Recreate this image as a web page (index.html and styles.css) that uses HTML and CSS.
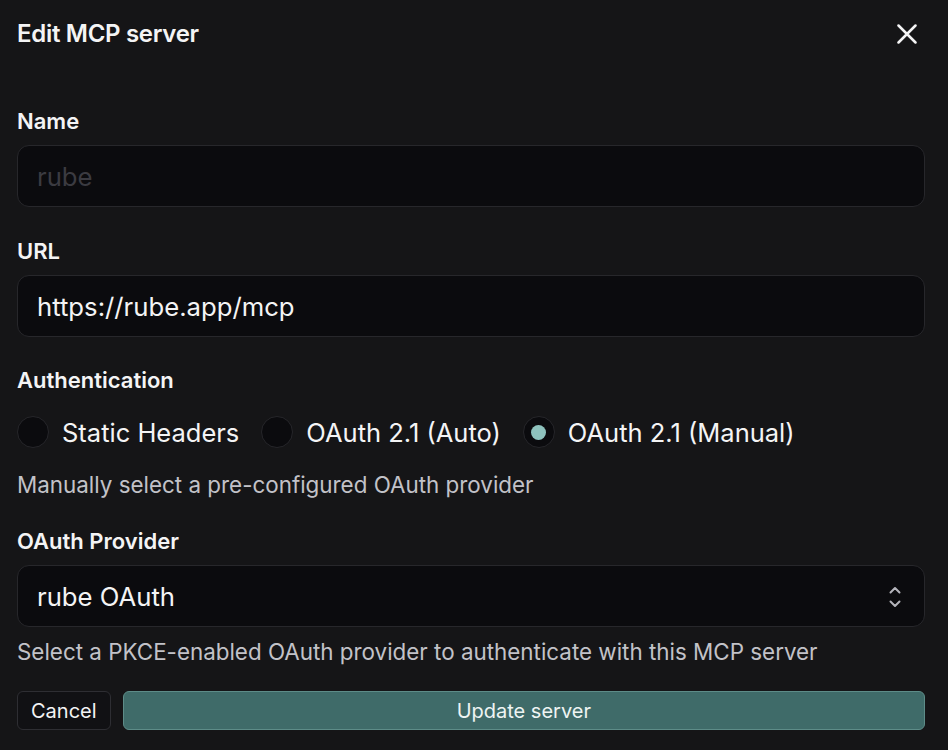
FILE: index.html
```html
<!DOCTYPE html>
<html lang="en">
<head>
<meta charset="utf-8">
<title>Edit MCP server</title>
<link rel="stylesheet" href="styles.css">
</head>
<body>
<div class="dialog">
  <header class="dialog-header">
    <h1 class="dialog-title">Edit MCP server</h1>
    <button class="close-btn" aria-label="Close">
      <svg width="20" height="20" viewBox="0 0 20 20" fill="none" stroke="#f4f4f5" stroke-width="2.5" stroke-linecap="round"><path d="M1.5 1.5 L18.5 18.5 M18.5 1.5 L1.5 18.5"/></svg>
    </button>
  </header>

  <div class="field field-first">
    <label class="field-label">Name</label>
    <div class="input"><span class="placeholder">rube</span></div>
  </div>

  <div class="field">
    <label class="field-label">URL</label>
    <div class="input"><span class="value">https://rube.app/mcp</span></div>
  </div>

  <div class="field field-auth">
    <label class="field-label">Authentication</label>
    <div class="radio-row">
      <div class="radio-item"><span class="radio"></span><span class="radio-label">Static Headers</span></div>
      <div class="radio-item"><span class="radio"></span><span class="radio-label">OAuth 2.1 (Auto)</span></div>
      <div class="radio-item"><span class="radio checked"></span><span class="radio-label">OAuth 2.1 (Manual)</span></div>
    </div>
    <p class="help help-auth">Manually select a pre-configured OAuth provider</p>
  </div>

  <div class="field field-provider">
    <label class="field-label">OAuth Provider</label>
    <div class="input select"><span class="value">rube OAuth</span>
      <svg class="chevrons" width="14" height="26" viewBox="0 0 14 26" fill="none" stroke="#b4b4bb" stroke-width="2" stroke-linecap="round" stroke-linejoin="round"><path d="M2.5 8.5 L7 4 L11.5 8.5"/><path d="M2.5 17.5 L7 22 L11.5 17.5"/></svg>
    </div>
    <p class="help help-provider">Select a PKCE-enabled OAuth provider to authenticate with this MCP server</p>
  </div>

  <div class="actions">
    <button class="btn btn-cancel">Cancel</button>
    <button class="btn btn-primary">Update server</button>
  </div>
</div>
</body>
</html>
```

FILE: styles.css
```css
html, body {
  margin: 0;
  padding: 0;
  background: #151517;
}
body {
  font-family: Inter, "Noto Sans", sans-serif;
  color: #f4f4f5;
}
.dialog {
  padding: 17px 23px 17px 17px;
  box-sizing: border-box;
  width: 948px;
}
.dialog-header {
  display: flex;
  align-items: center;
  justify-content: space-between;
  height: 34px;
}
.dialog-title {
  margin: 0;
  font-size: 24px;
  font-weight: 600;
  letter-spacing: -0.3px;
  line-height: 34px;
}
.close-btn {
  background: none;
  border: none;
  padding: 0;
  margin-right: 8px;
  width: 20px;
  height: 20px;
  display: flex;
}
.field {
  display: flex;
  flex-direction: column;
  margin-top: 32px;
}
.field-first { margin-top: 58px; }
.field-auth { margin-top: 31px; }
.field-provider { margin-top: 32px; }
.field-label {
  font-size: 22px;
  font-weight: 600;
  line-height: 24px;
  margin-bottom: 12px;
}
.field-auth .field-label { margin-bottom: 24px; }
.input {
  height: 62px;
  box-sizing: border-box;
  background: #0b0b0e;
  border: 1px solid #27272b;
  border-radius: 12px;
  display: flex;
  align-items: center;
  padding: 0 19px;
  font-size: 25.7px;
}
.placeholder { color: #3b3b41; }
.value { color: #f4f4f5; }
.select { justify-content: space-between; padding-right: 22px; }
.chevrons { margin-top: 2px; }
.radio-row {
  display: flex;
  gap: 22px;
  height: 32px;
  align-items: center;
}
.radio-item {
  display: flex;
  align-items: center;
  gap: 13px;
}
.radio {
  width: 32px;
  height: 32px;
  box-sizing: border-box;
  border-radius: 50%;
  background: #0b0b0e;
  border: 1px solid #26262a;
  display: flex;
  align-items: center;
  justify-content: center;
}
.radio.checked::after {
  content: "";
  width: 15px;
  height: 15px;
  border-radius: 50%;
  background: #8ec2bd;
}
.radio-label {
  font-size: 25.5px;
  color: #f4f4f5;
}
.help {
  margin: 0;
  font-size: 22.4px;
  line-height: 24px;
  color: #c2c2c8;
}
.help-auth { margin-top: 25px; }
.help-provider { margin-top: 13px; }
.actions {
  display: flex;
  gap: 12px;
  margin-top: 27px;
}
.btn {
  height: 39px;
  box-sizing: border-box;
  border-radius: 6px;
  font-family: inherit;
  font-size: 20px;
  color: #f4f4f5;
  padding: 0 13px;
}
.btn-cancel {
  background: #111114;
  border: 1px solid #2e2e33;
}
.btn-primary {
  flex: 1;
  background: #3f6b69;
  border: 1px solid #5d8c88;
  color: #eef4f3;
}
```
